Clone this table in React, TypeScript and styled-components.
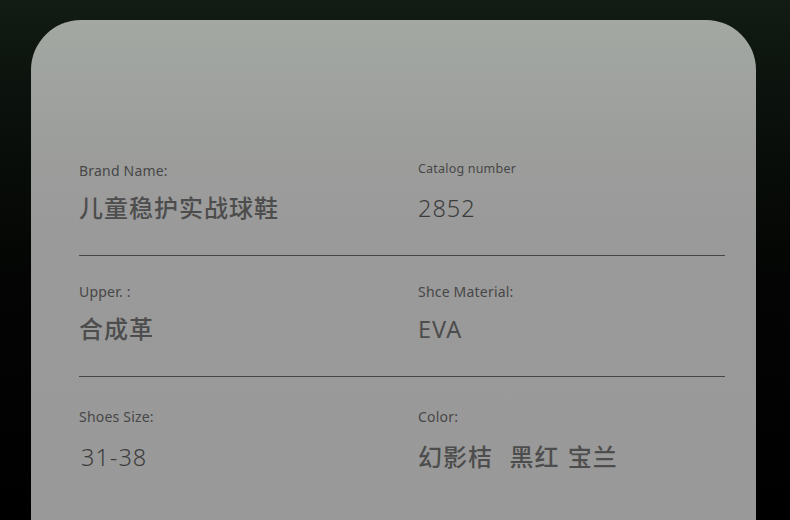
import React from 'react';
import styled, { createGlobalStyle } from 'styled-components';

const GlobalStyle = createGlobalStyle`
  html, body {
    margin: 0;
    padding: 0;
    background: #000;
  }
  body {
    font-family: 'Noto Sans', 'Noto Sans CJK SC', sans-serif;
  }
`;

const Page = styled.div`
  width: 790px;
  height: 520px;
  overflow: hidden;
  box-sizing: border-box;
  padding: 20px 0 0 31px;
  background: linear-gradient(180deg, #121b14 0%, #0b110c 20%, #030403 55%, #000 100%);
`;

const Card = styled.section`
  width: 725px;
  min-height: 540px;
  box-sizing: border-box;
  padding: 141px 31px 0 48px;
  border-radius: 50px 50px 0 0;
  background: linear-gradient(180deg, #a3a8a3 0%, #9d9f9c 20%, #9a9a9a 38%, #999 100%);
`;

const Row = styled.div<{ $last?: boolean; $top?: number; $gap?: number }>`
  display: grid;
  grid-template-columns: 339px 1fr;
  padding: ${(p) => p.$top ?? 27}px 0 31px;
  border-bottom: ${(p) => (p.$last ? 'none' : '1px solid #454545')};
  --field-gap: ${(p) => p.$gap ?? 11}px;
`;

const Field = styled.div`
  display: flex;
  flex-direction: column;
  gap: var(--field-gap);
`;

const Label = styled.span<{ $small?: boolean }>`
  font-family: 'Noto Sans', sans-serif;
  font-size: ${(p) => (p.$small ? 12.5 : 14)}px;
  line-height: 20px;
  letter-spacing: 0.2px;
  color: #474747;
  margin-top: ${(p) => (p.$small ? -2 : 0)}px;
  margin-bottom: ${(p) => (p.$small ? 2 : 0)}px;
`;

const Value = styled.span<{ $weight?: number; $indent?: number }>`
  font-family: 'Noto Sans', 'Noto Sans CJK SC', sans-serif;
  font-size: ${(p) => (p.$weight ? 23.5 : 24)}px;
  font-weight: ${(p) => p.$weight ?? 500};
  line-height: 32px;
  letter-spacing: 1px;
  word-spacing: 1px;
  padding-left: ${(p) => p.$indent ?? 0}px;
  color: ${(p) => (p.$weight && p.$weight < 400 ? '#3c3c3c' : '#4d4d4d')};
  white-space: pre;
`;

type Item = { label: string; value: string; small?: boolean; weight?: number; indent?: number };

const rows: Item[][] = [
  [
    { label: 'Brand Name:', value: '儿童稳护实战球鞋' },
    { label: 'Catalog number', value: '2852', small: true, weight: 300 },
  ],
  [
    { label: 'Upper. :', value: '合成革' },
    { label: 'Shce Material:', value: 'EVA', weight: 400 },
  ],
  [
    { label: 'Shoes Size:', value: '31-38', weight: 300, indent: 2 },
    { label: 'Color:', value: '幻影桔  黑红 宝兰' },
  ],
];

const App: React.FC = () => (
  <Page>
    <GlobalStyle />
    <Card>
      {rows.map((row, i) => (
        <Row
          key={i}
          $top={i === 0 ? 0 : i === 2 ? 30 : 26}
          $gap={i === 2 ? 14 : 11}
          $last={i === rows.length - 1}
        >
          {row.map((item) => (
            <Field key={item.label}>
              <Label $small={item.small}>{item.label}</Label>
              <Value $weight={item.weight} $indent={item.indent}>
                {item.value}
              </Value>
            </Field>
          ))}
        </Row>
      ))}
    </Card>
  </Page>
);

export default App;
